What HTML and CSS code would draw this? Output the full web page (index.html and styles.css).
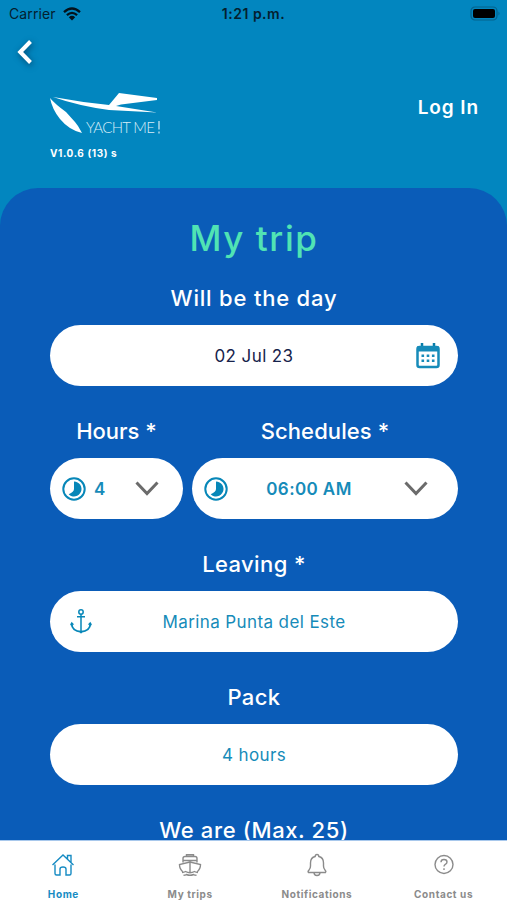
FILE: index.html
```html
<!DOCTYPE html>
<html lang="en">
<head>
    <meta charset="UTF-8">
    <meta name="viewport" content="width=device-width, initial-scale=1.0">
    <title>Yacht Me</title>
    <link rel="stylesheet" href="styles.css">
</head>
<body>
    <div class="app">
        <!-- Status bar -->
        <div class="status-bar">
            <div class="carrier">
                <span>Carrier</span>
                <svg class="wifi" viewBox="0 0 18 14">
                    <path d="M1 5.2Q9-2.2 17 5.2M3.9 8.2Q9 3.6 14.1 8.2" fill="none" stroke="#04121b" stroke-width="2.3"/>
                    <path d="M5.8 10.2Q9 7.4 12.2 10.2L9 13.6Z" fill="#04121b"/>
                </svg>
            </div>
            <span class="time">1:21 p.m.</span>
            <svg class="battery" viewBox="0 0 31 15">
                <rect x="1" y="1" width="26" height="13" rx="4" fill="none" stroke="#04628c" stroke-width="1.2"/>
                <rect x="3" y="3" width="22" height="9" rx="2" fill="#000"/>
                <path d="M28.5 5.5q2 2 0 4z" fill="#04628c"/>
            </svg>
        </div>

        <!-- Header -->
        <header class="header">
            <svg class="back" viewBox="0 0 16 26">
                <path d="M13.5 2.5 3.2 13l10.3 10.5" fill="none" stroke="#fff" stroke-width="4"/>
            </svg>
            <div class="header-row">
                <div class="brand">
                    <svg class="logo" viewBox="0 0 112 44">
                        <path d="M3 4Q30 9 59 12L69 0 107 5V7L71 11.500 66 13 107 19.500 59 17Q29 13 3 4Z" fill="#fff"/>
                        <path d="M0 5Q5 11 16 19L25 29 28 33 32 40Q19 37 10 26Q2 16 0 5Z" fill="#fff"/>
                        <text class="logo-text" x="36" y="40" textLength="69">YACHT ME</text>
                        <path d="M109 28v8.500M109 38.500v2" stroke="#d8edf7" stroke-width="1.200"/>
                    </svg>
                    <span class="version">V1.0.6 (13) s</span>
                </div>
                <a class="login">Log In</a>
            </div>
        </header>

        <!-- Trip form -->
        <main class="sheet">
            <h1>My trip</h1>

            <div class="field">
                <label class="label-day">Will be the day</label>
                <div class="pill">
                    <span class="value dark">02 Jul 23</span>
                    <svg class="calendar" viewBox="0 0 24 26">
                        <path d="M6 0v5M18 0v5" stroke="#087ca9" stroke-width="2.500"/>
                        <rect x="1.500" y="4" width="21" height="20" rx="2" fill="#fff" stroke="#168bb9" stroke-width="2.500"/>
                        <path d="M1 3.500h22v5H1z" fill="#168bb9"/>
                        <path d="M5.500 12.700h2.600M10.700 12.700h2.600M15.900 12.700h2.600M5.500 17.800h2.600M10.700 17.800h2.600M15.900 17.800h2.600" stroke="#168bb9" stroke-width="2.600"/>
                    </svg>
                </div>
            </div>

            <div class="field-row">
                <div class="field">
                    <label class="label-hours">Hours *</label>
                    <div class="pill select">
                        <svg class="clock" viewBox="0 0 24 24">
                            <circle cx="12" cy="12" r="10.700" fill="none" stroke="#0787b8" stroke-width="2"/>
                            <path d="M12 4.500a7.500 7.500 0 1 1-5.300 12.800Q12 15 12 12z" fill="#0787b8"/>
                        </svg>
                        <span class="value hours">4</span>
                        <svg class="chevron" viewBox="0 0 24 15">
                            <path d="M1.500 1.500 12 12.500 22.500 1.500" fill="none" stroke="#6b6b6b" stroke-width="3"/>
                        </svg>
                    </div>
                </div>
                <div class="field">
                    <label class="label-schedules">Schedules *</label>
                    <div class="pill select wide">
                        <svg class="clock" viewBox="0 0 24 24">
                            <circle cx="12" cy="12" r="10.700" fill="none" stroke="#0787b8" stroke-width="2"/>
                            <path d="M12 4.500a7.500 7.500 0 1 1-5.300 12.800Q12 15 12 12z" fill="#0787b8"/>
                        </svg>
                        <span class="value schedule">06:00 AM</span>
                        <svg class="chevron" viewBox="0 0 24 15">
                            <path d="M1.500 1.500 12 12.500 22.500 1.500" fill="none" stroke="#6b6b6b" stroke-width="3"/>
                        </svg>
                    </div>
                </div>
            </div>

            <div class="field">
                <label>Leaving *</label>
                <div class="pill">
                    <svg class="anchor" viewBox="0 0 22 25" fill="none" stroke="#0787b8" stroke-width="1.500">
                        <circle cx="11" cy="3" r="2.200"/>
                        <path d="M11 5.200V23M7 7.700h8"/>
                        <path d="M1.500 14.500C2 20 6 22.500 11 22.700 16 22.500 20 20 20.500 14.500" stroke-width="1.900"/>
                        <path d="M0 16.200 1.600 12.700 4.200 15.500ZM22 16.200 20.400 12.700 17.800 15.500ZM9 22.200h4l-2 2.600z" fill="#0787b8" stroke="none"/>
                    </svg>
                    <span class="value port">Marina Punta del Este</span>
                </div>
            </div>

            <div class="field">
                <label>Pack</label>
                <div class="pill">
                    <span class="value pack">4 hours</span>
                </div>
            </div>

            <div class="field">
                <label class="label-people">We are (Max. 25)</label>
            </div>
        </main>

        <!-- Tab bar -->
        <nav class="tab-bar">
            <a class="tab active">
                <svg viewBox="0 0 24 24">
                    <path d="M4 11.500v9q0 1.500 1.500 1.500H9v-6q0-2 3-2t3 2v6h3.500q1.500 0 1.500-1.500v-9M1.500 12 12 2l10.500 10M16.500 6V2.500H20v7"/>
                </svg>
                <span>Home</span>
            </a>
            <a class="tab trips">
                <svg viewBox="0 0 24 24">
                    <path d="M8.500 3.500V1.700h7v1.800M5 9.500V5.500q0-2 2-2h10q2 0 2 2v4M5 7.500h14M5 19Q1.500 16 1.500 11.500L12 9l10.500 2.500Q22.500 16 19 19M12 9v10M4 19.500q2 0 3.500-1 4.500 2.500 9 0 1.500 1 3.500 1M5.500 22.300q2 0 3-.8 3.500 1.600 7 0 1 .8 3 .8"/>
                </svg>
                <span>My trips</span>
            </a>
            <a class="tab notifications">
                <svg viewBox="0 0 24 24">
                    <path d="M3.500 19.500q-1-1 .5-2.500 1.500-1.700 1.500-4V10q0-5.500 4.700-6.500Q10.200 1.500 12 1.500t1.800 2Q18.500 4.500 18.500 10v3q0 2.300 1.500 4 1.500 1.500.500 2.500zM9 19.500q0 3 3 3t3-3"/>
                </svg>
                <span>Notifications</span>
            </a>
            <a class="tab contact">
                <svg viewBox="0 0 24 24">
                    <circle cx="12" cy="11.500" r="9"/>
                    <path d="M9 9.200Q9 6.500 12 6.500t3 2.500Q15 10.500 13.300 11.300 12 12 12 13.500M12 15.200v1.700"/>
                </svg>
                <span>Contact us</span>
            </a>
        </nav>
    </div>
</body>
</html>
```
FILE: styles.css
```css
* {
    margin: 0;
    padding: 0;
    box-sizing: border-box;
}

body {
    font-family: Inter, sans-serif;
    background: #0286bf;
    color: white;
    height: 100vh;
    overflow: hidden;
}

svg {
    display: block;
    flex-shrink: 0;
}

.app {
    display: flex;
    flex-direction: column;
    height: 100vh;
}

/* Status bar */
.status-bar {
    display: grid;
    grid-template-columns: 1fr auto 1fr;
    align-items: center;
    height: 27px;
    padding: 0 6px 0 9px;
    color: #04202f;
    font-size: 14px;
    flex-shrink: 0;
}

.carrier {
    display: flex;
    align-items: center;
    gap: 7px;
    letter-spacing: 0.1px;
}

.wifi {
    width: 18px;
    height: 14px;
}

.time {
    margin-right: 3px;
    font-weight: 600;
    letter-spacing: 0.5px;
}

.battery {
    width: 31px;
    height: 15px;
    justify-self: end;
}

/* Header */
.header {
    height: 161px;
    padding: 12px 28px 0 17px;
    flex-shrink: 0;
}

.back {
    width: 16px;
    height: 26px;
    overflow: visible;
    filter: drop-shadow(1px 2px 3px rgba(0, 30, 60, 0.6));
}

.header-row {
    display: flex;
    justify-content: space-between;
    padding: 28px 0 0 33px;
}

.logo {
    width: 112px;
    height: 44px;
    overflow: visible;
}

.logo-text {
    font-family: Lato, sans-serif;
    font-size: 15px;
    font-weight: 300;
    fill: #d8edf7;
}

.version {
    display: block;
    margin-top: 9px;
    font-size: 10px;
    line-height: 14px;
    font-weight: 700;
    letter-spacing: 0.6px;
}

.login {
    font-size: 19px;
    line-height: 30px;
    font-weight: 600;
    letter-spacing: 0.9px;
}

/* Trip form */
.sheet {
    flex: 1;
    min-height: 0;
    overflow: hidden;
    padding: 28px 49px 0 50px;
    background: #0a5cb8;
    border-radius: 38px 38px 0 0;
}

h1 {
    height: 44px;
    line-height: 44px;
    font-size: 35px;
    font-weight: 500;
    letter-spacing: 1.6px;
    text-align: center;
    color: #50e3b4;
}

.field label {
    display: block;
    height: 72px;
    padding-top: 30px;
    line-height: 30px;
    font-size: 22px;
    font-weight: 500;
    letter-spacing: 0.4px;
    text-align: center;
}

.field .label-day {
    height: 65px;
    padding-top: 23px;
    letter-spacing: 0.8px;
}

.field .label-hours {
    letter-spacing: 0;
}

.field .label-schedules {
    letter-spacing: 0.1px;
}

.field .label-people {
    height: 60px;
    letter-spacing: 0.6px;
}

.field-row {
    display: grid;
    grid-template-columns: 133px 1fr;
    gap: 9px;
}

.pill {
    display: grid;
    grid-template-columns: 42px 1fr 42px;
    align-items: center;
    height: 61px;
    border-radius: 31px;
    background: white;
    color: #168bb9;
}

.value {
    grid-column: 2;
    grid-row: 1;
    font-size: 17px;
    letter-spacing: 0.4px;
    text-align: center;
    white-space: nowrap;
}

.dark {
    color: #17234c;
}

.calendar {
    grid-column: 3;
    grid-row: 1;
    width: 24px;
    height: 26px;
}

.anchor {
    grid-column: 1;
    grid-row: 1;
    width: 22px;
    height: 25px;
    justify-self: end;
}

.select {
    grid-template-columns: 24px 1fr 24px;
    padding: 0 24px 0 12px;
}

.select .value {
    font-weight: 600;
}

.select .hours {
    padding-left: 8px;
    text-align: left;
}

.select .schedule {
    padding-right: 14px;
}

.wide {
    padding-right: 30px;
}

.clock,
.chevron {
    grid-row: 1;
    width: 24px;
}

.chevron {
    grid-column: 3;
}

/* Tab bar */
.tab-bar {
    display: grid;
    grid-template-columns: repeat(4, 1fr);
    height: 60px;
    padding-top: 12px;
    border-top: 1px solid #a8c8ec;
    background: white;
    flex-shrink: 0;
}

.tab {
    display: flex;
    flex-direction: column;
    align-items: center;
    gap: 10px;
    color: #8b8b8b;
    font-size: 10px;
    line-height: 14px;
    font-weight: 700;
    letter-spacing: 0.6px;
}

.tab svg {
    width: 24px;
    height: 24px;
    fill: none;
    stroke: currentColor;
    stroke-width: 1.4;
}

.active {
    color: #168bc3;
}
```
